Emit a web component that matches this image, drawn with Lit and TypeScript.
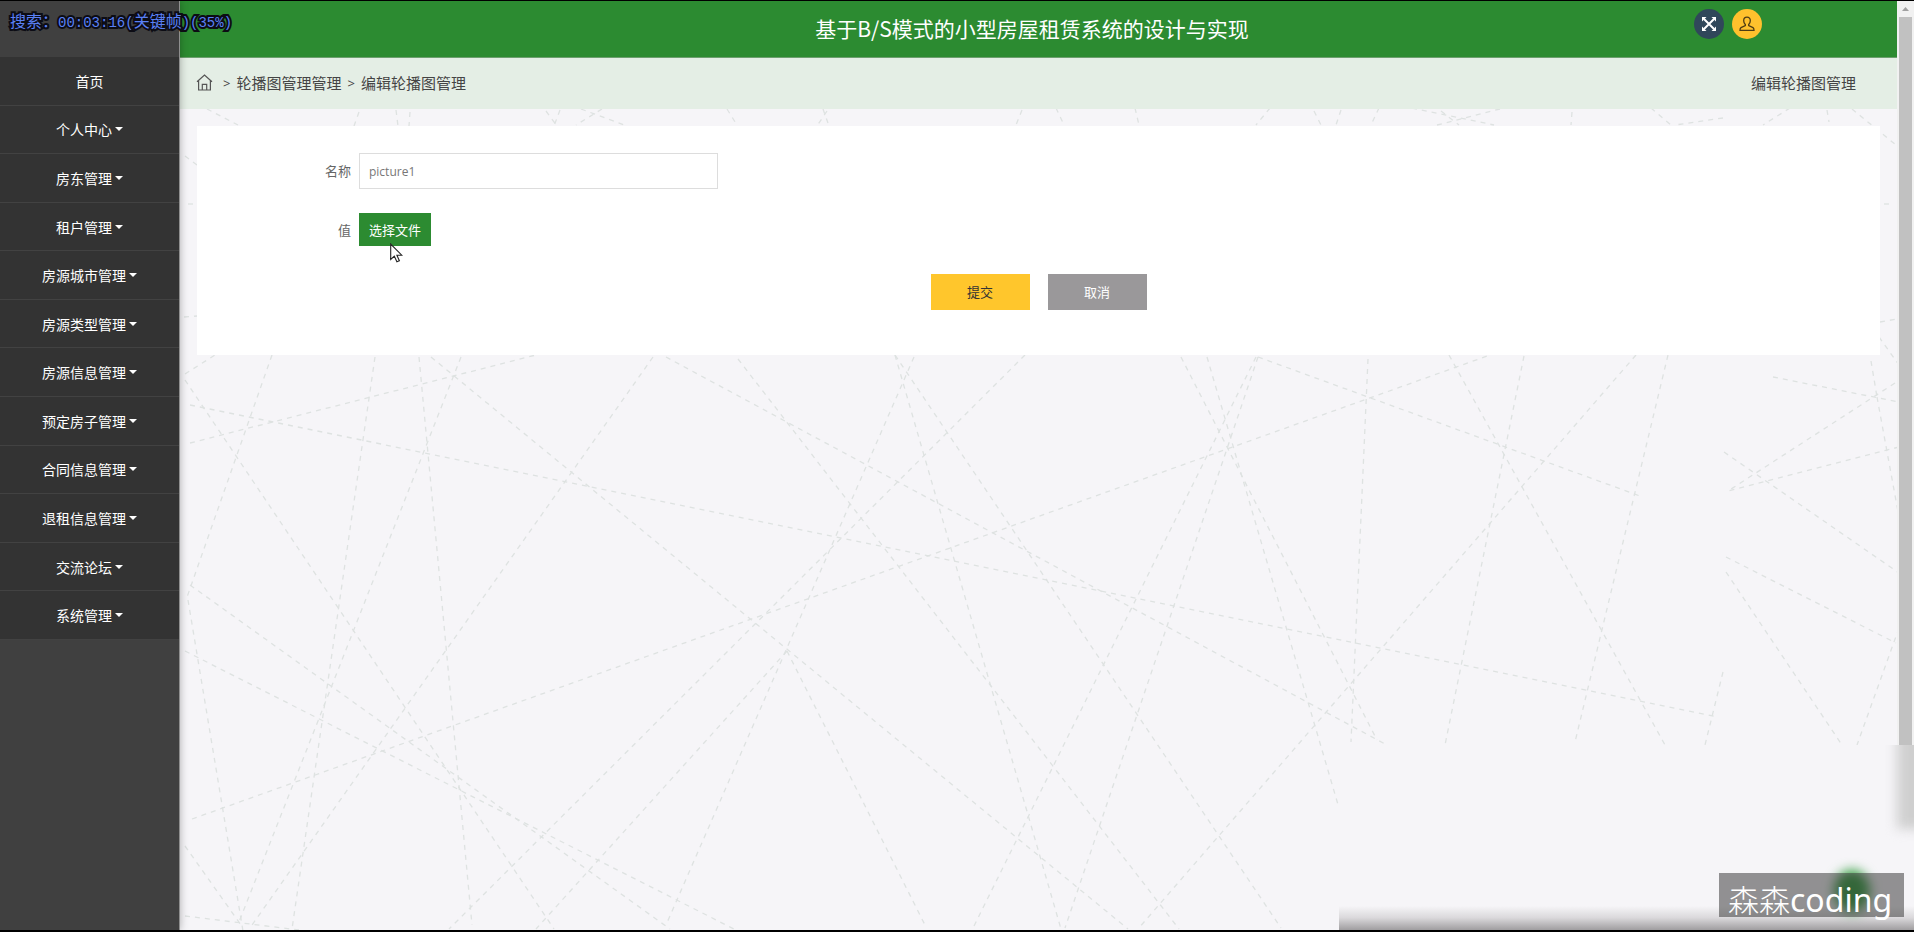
import { LitElement, html, svg, css } from "lit";
import { customElement, property } from "lit/decorators.js";

type Segment = [number, number, number, number];

const BACKDROP: Segment[] = [
  [185, 374, 215, 355], [272, 355, 186, 600], [188, 600, 243, 931], [185, 380, 554, 929],
  [375, 357, 292, 929], [419, 357, 472, 925], [461, 357, 239, 922], [190, 405, 1718, 717],
  [190, 443, 536, 355], [431, 357, 1128, 929], [653, 357, 252, 925], [666, 357, 1385, 744],
  [738, 359, 1179, 929], [190, 585, 670, 929], [185, 651, 734, 929], [192, 819, 1490, 355],
  [185, 846, 241, 925], [185, 916, 299, 930], [1025, 355, 449, 929], [914, 357, 666, 925],
  [787, 651, 536, 929], [787, 651, 926, 927], [895, 355, 1061, 929], [895, 355, 1281, 928],
  [1181, 357, 1377, 740], [1207, 357, 1339, 808], [1256, 357, 973, 928], [1258, 357, 1065, 928],
  [1258, 357, 1640, 496], [1368, 359, 1351, 742], [1636, 355, 1138, 929], [1449, 355, 1665, 745],
  [1524, 356, 1445, 745], [1668, 355, 1575, 742], [1773, 377, 1899, 402], [1724, 452, 1899, 573],
  [1895, 383, 1728, 491], [1899, 447, 1728, 491], [1726, 557, 1896, 643], [1726, 572, 1842, 745],
  [1899, 628, 1857, 745], [1723, 672, 1705, 745], [1871, 361, 1877, 397], [1877, 397, 1899, 517],
  [207, 109, 238, 125], [359, 112, 354, 126], [396, 110, 398, 126], [410, 112, 409, 126],
  [546, 111, 557, 126], [560, 110, 554, 126], [581, 109, 624, 125], [602, 109, 576, 125],
  [727, 109, 737, 125], [823, 109, 828, 123], [827, 111, 817, 126], [1022, 110, 1016, 125],
  [1056, 108, 1064, 125], [1135, 108, 1139, 125], [1270, 108, 1256, 125], [1314, 111, 1321, 125],
  [1341, 110, 1336, 125], [1379, 108, 1371, 125], [1412, 108, 1494, 125], [1500, 109, 1437, 125],
  [1441, 111, 1459, 125], [1572, 112, 1571, 125], [1651, 108, 1671, 125], [1723, 118, 1675, 125],
  [1790, 108, 1763, 125], [1827, 110, 1829, 122], [1852, 109, 1896, 145], [1884, 204, 1892, 204],
  [1880, 322, 1897, 319], [1879, 337, 1899, 365], [185, 156, 197, 165], [188, 204, 196, 204],
  [184, 317, 197, 316],
];

const MENU = [
  { label: "首页", open: false },
  { label: "个人中心", open: true },
  { label: "房东管理", open: true },
  { label: "租户管理", open: true },
  { label: "房源城市管理", open: true },
  { label: "房源类型管理", open: true },
  { label: "房源信息管理", open: true },
  { label: "预定房子管理", open: true },
  { label: "合同信息管理", open: true },
  { label: "退租信息管理", open: true },
  { label: "交流论坛", open: true },
  { label: "系统管理", open: true },
];

@customElement("side-menu")
export class SideMenu extends LitElement {
  static styles = css`
    :host {
      display: block;
      padding-top: 56px;
      background: #404040;
      border-right: 1px solid #8f8f8f;
      box-shadow: 0 0 8px rgba(0, 0, 0, 0.3);
      position: relative;
    }
    .list {
      list-style: none;
      margin: 0;
      padding: 0;
      height: 583px;
      display: grid;
      grid-auto-rows: 1fr;
    }
    .item {
      background: #333;
      border-bottom: 1px solid #424242;
      display: grid;
    }
    .link {
      display: flex;
      align-items: center;
      justify-content: center;
      gap: 3px;
      color: #fff;
      font-size: 14px;
      line-height: 20px;
      text-decoration: none;
    }
    .caret {
      border: 4px solid transparent;
      border-top-color: #fff;
      border-bottom: 0;
    }
  `;
  render() {
    return html`<nav>
      <ul class="list">
        ${MENU.map(
          (m) => html`<li class="item">
            <a class="link" href="#">${m.label}${m.open ? html`<span class="caret"></span>` : ""}</a>
          </li>`
        )}
      </ul>
    </nav>`;
  }
}

@customElement("line-backdrop")
export class LineBackdrop extends LitElement {
  static styles = css`
    :host {
      position: absolute;
      inset: 0;
      overflow: hidden;
    }
    .canvas {
      display: block;
      width: 100%;
      height: 100%;
    }
  `;
  render() {
    return html`<svg class="canvas" aria-hidden="true">
      <g transform="translate(-180 -1)" stroke="#dee2e1" stroke-width="1.3" stroke-dasharray="5 5" fill="none">
        ${BACKDROP.map(([a, b, c, d]) => svg`<path d="M${a} ${b}L${c} ${d}" />`)}
      </g>
    </svg>`;
  }
}

@customElement("edit-form")
export class EditForm extends LitElement {
  @property() name = "picture1";

  static styles = css`
    :host {
      display: block;
      background: #fff;
      padding: 27px 0 45px;
      position: relative;
    }
    .form {
      display: grid;
      gap: 24px;
      margin: 0;
    }
    .row {
      display: grid;
      grid-template-columns: 154px 1fr;
      column-gap: 8px;
      align-items: center;
      justify-items: start;
      font-size: 13px;
      line-height: 20px;
      color: #666;
    }
    .label {
      justify-self: end;
    }
    .text {
      box-sizing: border-box;
      width: 359px;
      height: 36px;
      padding: 0 9px;
      border: 1px solid #ddd;
      background: #fff;
      color: #777;
      font: 12px "Open Sans", "Noto Sans CJK SC", sans-serif;
      outline: none;
    }
    .btn {
      border: 0;
      border-radius: 0;
      padding: 0;
      font: inherit;
      font-size: 13px;
      line-height: 20px;
      cursor: pointer;
    }
    .pick {
      width: 72px;
      height: 33px;
      background: #2c8b31;
      color: #fff;
    }
    .actions {
      display: flex;
      justify-content: center;
      gap: 18px;
      padding-top: 4px;
    }
    .submit,
    .cancel {
      width: 99px;
      height: 36px;
    }
    .submit {
      background: #ffc62c;
      color: #333;
    }
    .cancel {
      background: #9a989a;
      color: #fff;
    }
  `;
  render() {
    return html`<form class="form" @submit=${(e: Event) => e.preventDefault()}>
      <div class="row">
        <label class="label" for="name">名称</label>
        <input class="text" id="name" type="text" .value=${this.name} />
      </div>
      <div class="row">
        <label class="label" for="file">值</label>
        <button class="btn pick" id="file" type="button">选择文件</button>
      </div>
      <div class="actions">
        <button class="btn submit" type="submit">提交</button>
        <button class="btn cancel" type="button">取消</button>
      </div>
    </form>`;
  }
}

@customElement("app-root")
export class AppRoot extends LitElement {
  @property() heading = "基于B/S模式的小型房屋租赁系统的设计与实现";

  static styles = css`
    :host {
      display: block;
      font-family: "Noto Sans CJK SC", sans-serif;
    }
    .shell {
      box-sizing: border-box;
      position: relative;
      min-height: 100vh;
      overflow: hidden;
      display: grid;
      grid-template-columns: 180px 1fr 17px;
      border-top: 1px solid #000;
      border-bottom: 2px solid #000;
      background: #f6f5f8;
    }
    .menu {
      z-index: 1;
    }
    .main {
      position: relative;
    }
    .header {
      position: relative;
      display: grid;
      grid-template-columns: 1fr auto 1fr;
      align-items: center;
      height: 56px;
      padding: 0 135px 0 122px;
      background: #2c8b31;
      border-bottom: 1px solid #6d9f6f;
    }
    .title {
      grid-column: 2;
      margin: 0;
      padding-bottom: 2px;
      font-size: 21px;
      line-height: 30px;
      font-weight: 400;
      color: #fff;
      white-space: nowrap;
    }
    .tools {
      justify-self: end;
      align-self: start;
      padding-top: 8px;
      display: flex;
      gap: 8px;
    }
    .round {
      width: 30px;
      height: 30px;
      padding: 0;
      border: 0;
      border-radius: 50%;
      display: grid;
      place-items: center;
      cursor: pointer;
    }
    .full {
      background: #30475a;
    }
    .user {
      background: #ffc12d;
    }
    .crumbs {
      position: relative;
      box-sizing: border-box;
      display: flex;
      align-items: center;
      justify-content: space-between;
      height: 51px;
      padding: 0 41px 2px 16px;
      background: #e4eee5;
      color: #444;
      font-size: 15px;
      line-height: 20px;
    }
    .trail {
      display: flex;
      align-items: center;
      gap: 6px;
    }
    .home {
      display: flex;
      padding-right: 4px;
    }
    .crumb {
      color: inherit;
      text-decoration: none;
    }
    .sep {
      font-family: "Open Sans", sans-serif;
      font-size: 13px;
    }
    .content {
      padding: 17px 17px;
    }
    .track {
      background: #f1f1f1;
      padding: 0 2px;
    }
    .arrow {
      display: grid;
      place-items: center;
      height: 16px;
    }
    .thumb {
      height: 80%;
      background: #c1c1c1;
    }
    .veil {
      position: absolute;
      z-index: 2;
      right: 0;
      bottom: -2px;
      width: 575px;
      height: 187px;
      overflow: hidden;
      background: #f6f5f8;
    }
    .smudge {
      position: absolute;
      right: -20px;
      top: -20px;
      width: 37px;
      height: 104px;
      background: #cfcfcf;
      filter: blur(6px);
    }
    .shade {
      position: absolute;
      inset: auto 0 0 0;
      height: 26px;
      background: linear-gradient(rgba(150, 148, 150, 0), rgba(200, 198, 200, 0.6) 45%, #969496);
    }
    .glow {
      position: absolute;
      right: 44px;
      bottom: 20px;
      width: 36px;
      height: 42px;
      border-radius: 50%;
      background: #2c9a38;
      filter: blur(6px);
    }
    .mark {
      position: absolute;
      right: 10px;
      bottom: 15px;
      box-sizing: border-box;
      width: 185px;
      height: 44px;
      padding-left: 9px;
      background: rgba(60, 60, 60, 0.54);
      color: #fff;
      font-size: 31px;
      font-weight: 300;
      line-height: 52px;
      white-space: nowrap;
    }
    .latin {
      font-family: "Noto Sans", sans-serif;
      font-size: 32px;
      font-weight: 400;
    }
    .seek {
      position: absolute;
      z-index: 2;
      left: 10px;
      top: 7px;
      color: #5a80f5;
      font-size: 16px;
      line-height: 24px;
      white-space: nowrap;
      -webkit-text-stroke: 4px #0c0c14;
      paint-order: stroke fill;
    }
    .mono {
      font-family: "Liberation Mono", monospace;
      font-size: 14px;
    }
    .pointer {
      position: absolute;
      z-index: 2;
      left: 390px;
      top: 242px;
    }
  `;

  render() {
    return html`<div class="shell">
      <side-menu class="menu"></side-menu>
      <main class="main">
        <line-backdrop></line-backdrop>
        <header class="header">
          <h1 class="title">${this.heading}</h1>
          <div class="tools">
            <button class="round full" aria-label="全屏">
              <svg width="16" height="16" viewBox="0 0 16 16" stroke="#fff" fill="none" stroke-width="2">
                <path d="M3 3l10 10M13 3L3 13" />
                <path d="M1 5.500V1h4.500L1 5.500zM10.500 1H15v4.500zM15 10.500V15h-4.500zM5.500 15H1v-4.500z" fill="#fff" stroke="none" />
              </svg>
            </button>
            <button class="round user" aria-label="用户">
              <svg width="16" height="16" viewBox="0 0 16 16" stroke="#4d3b13" fill="none" stroke-width="1.3">
                <path d="M8 1.200c-2.200 0-3.300 1.500-3.300 3.500 0 1.700.7 2.900 1.600 3.700v1.300L2 11.600c-.8.5-1 1.300-1 2.700h14c0-1.400-.2-2.200-1-2.700L9.700 9.700V8.400c.9-.8 1.600-2 1.600-3.700 0-2-1.100-3.500-3.300-3.500z" />
              </svg>
            </button>
          </div>
        </header>
        <nav class="crumbs" aria-label="路径">
          <div class="trail">
            <a class="home" href="#" aria-label="首页">
              <svg width="17" height="17" viewBox="0 0 17 17" fill="none" stroke="#555" stroke-width="1.200">
                <path d="M1 7.800L8.500 1 16 7.800M2.600 6.600V16h11.800V6.600M6.300 16v-5.600h4.400V16" />
              </svg>
            </a>
            <span class="sep">&gt;</span>
            <a class="crumb" href="#">轮播图管理管理</a>
            <span class="sep">&gt;</span>
            <span class="crumb">编辑轮播图管理</span>
          </div>
          <span>编辑轮播图管理</span>
        </nav>
        <section class="content"><edit-form></edit-form></section>
      </main>
      <div class="track">
        <div class="arrow">
          <svg width="7" height="4" viewBox="0 0 7 4"><path d="M0 4L3.500 0 7 4z" fill="#a0a0a0" /></svg>
        </div>
        <div class="thumb"></div>
      </div>
      <div class="veil">
        <div class="smudge"></div>
        <div class="shade"></div>
        <div class="glow"></div>
        <div class="mark">森森<span class="latin">coding</span></div>
      </div>
      <div class="seek">搜索：<span class="mono">00:03:16(</span>关键帧<span class="mono">)(35%)</span></div>
      <svg class="pointer" width="13" height="20" viewBox="0 0 13 20">
        <path d="M.7 1v15.500l3.600-3.400 2.600 5.700 2.500-1.100-2.500-5.500h4.900z" fill="#fff" stroke="#222" stroke-width="1.100" />
      </svg>
    </div>`;
  }
}
